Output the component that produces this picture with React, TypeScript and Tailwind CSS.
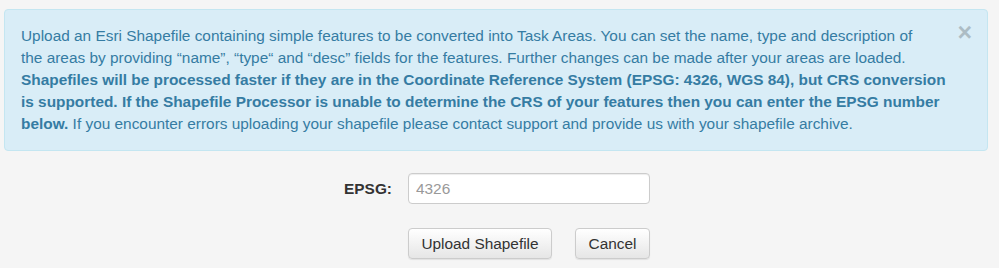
import React from "react";

export default function App() {
  return (
    <div
      className="min-h-[268px] w-full bg-[#f5f5f5] pt-[9px] pl-[4px] pr-[11px]"
      style={{ fontFamily: '"Liberation Sans", Arial, sans-serif' }}
    >
      <div className="relative rounded-[4px] border border-[#c4e6f1] bg-[#d9edf7] pt-[15px] pb-[15px] pl-[16px] pr-[35px] text-[15.4px] leading-[22px] text-[#357ca3]">
        <button className="absolute right-[15px] top-[10px] text-[25px] font-bold leading-[25px] text-black opacity-20">
          ×
        </button>
        <p>
          Upload an Esri Shapefile containing simple features to be converted into Task Areas. You can set the name, type and description of
          <br />
          the areas by providing “name”, “type“ and “desc” fields for the features. Further changes can be made after your areas are loaded.
          <br />
          <strong>
            Shapefiles will be processed faster if they are in the Coordinate Reference System (EPSG: 4326, WGS 84), but CRS conversion
            <br />
            is supported. If the Shapefile Processor is unable to determine the CRS of your features then you can enter the EPSG number
            <br />
            below.
          </strong>{" "}
          If you encounter errors uploading your shapefile please contact support and provide us with your shapefile archive.
        </p>
      </div>

      <div className="mt-[22px] flex items-center">
        <label className="w-[388px] text-right text-[15.4px] font-bold text-[#333333]">EPSG:</label>
        <input
          className="ml-[16px] h-[31px] w-[242px] rounded-[4px] border border-[#cccccc] bg-white px-[7px] text-[15.4px] text-[#555] placeholder:text-[#999999] outline-none shadow-[inset_0_1px_1px_rgba(0,0,0,0.075)]"
          placeholder="4326"
        />
      </div>

      <div className="mt-[24px] flex gap-[23px] pl-[404px]">
        <button className="h-[31px] w-[144px] rounded-[4px] border border-[#cccccc] bg-gradient-to-b from-white to-[#e6e6e6] text-[15.4px] text-[#333333] shadow-[0_1px_1px_rgba(0,0,0,0.08)]">
          Upload Shapefile
        </button>
        <button className="h-[31px] w-[75px] rounded-[4px] border border-[#cccccc] bg-gradient-to-b from-white to-[#e6e6e6] text-[15.4px] text-[#333333] shadow-[0_1px_1px_rgba(0,0,0,0.08)]">
          Cancel
        </button>
      </div>
    </div>
  );
}
